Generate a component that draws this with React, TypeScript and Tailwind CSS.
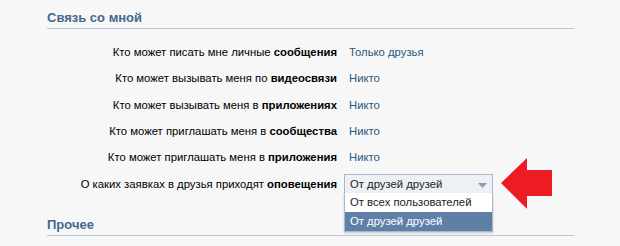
const rows: { label: string; bold: string; value: string }[] = [
  { label: "Кто может писать мне личные", bold: "сообщения", value: "Только друзья" },
  { label: "Кто может вызывать меня по", bold: "видеосвязи", value: "Никто" },
  { label: "Кто может вызывать меня в", bold: "приложениях", value: "Никто" },
  { label: "Кто может приглашать меня в", bold: "сообщества", value: "Никто" },
  { label: "Кто может приглашать меня в", bold: "приложения", value: "Никто" },
];

const SectionHeader = ({ title, height }: { title: string; height: string }) => (
  <div
    className={`${height} flex items-end pb-[4px] border-b border-[#b7c6dd] text-[13px] leading-none font-bold text-[#45688e]`}
  >
    {title}
  </div>
);

const Dropdown = () => (
  <div className="relative ml-[-5px] w-[149px] h-[20px] border border-[#a8b8cc] bg-[#edf1f5] flex items-center pl-[5px] text-[#222]">
    От друзей друзей
    <svg className="absolute right-[5px] top-[8px]" width="9" height="5" viewBox="0 0 9 5">
      <polygon points="0,0 9,0 4.5,5" fill="#8c9bae" />
    </svg>
    <div className="absolute left-[-1px] top-[18px] w-[149px] border border-[#a8b8cc] border-t-0 bg-white shadow-[0_1px_2px_rgba(0,0,0,0.2)]">
      <div className="h-[19px] flex items-center pl-[5px] text-[#222]">От всех пользователей</div>
      <div className="h-[19px] flex items-center pl-[5px] bg-[#5e7fa6] text-white">От друзей друзей</div>
    </div>
    <svg
      className="absolute left-[156px] top-1/2 -translate-y-1/2"
      width="52"
      height="52"
      viewBox="0 0 52 52"
    >
      <polygon points="0,25 26,0 26,12 51,12 51,38 26,38 26,51" fill="#ed1c24" />
    </svg>
  </div>
);

export default function App() {
  return (
    <div className="w-[620px] h-[246px] bg-[#f7f7f7] overflow-hidden font-['Liberation_Sans',Arial,sans-serif] text-[11.3px]">
      <div className="ml-[47px] w-[527px]">
        <SectionHeader title="Связь со мной" height="h-[29px]" />
        <div className="pt-[10px] grid grid-cols-[290px_1fr] gap-x-[12px]">
          {rows.map((r, i) => (
            <div key={i} className="contents">
              <div className="h-[26.4px] flex items-center justify-end text-black whitespace-nowrap">
                {r.label}&nbsp;<b>{r.bold}</b>
              </div>
              <div className="h-[26.4px] flex items-center text-[#2b587a]">{r.value}</div>
            </div>
          ))}
          <div className="h-[26.4px] flex items-center justify-end text-black whitespace-nowrap">
            О каких заявках в друзья приходят&nbsp;<b>оповещения</b>
          </div>
          <div className="h-[26.4px] flex items-center">
            <Dropdown />
          </div>
        </div>
        <SectionHeader title="Прочее" height="h-[39px]" />
      </div>
    </div>
  );
}
